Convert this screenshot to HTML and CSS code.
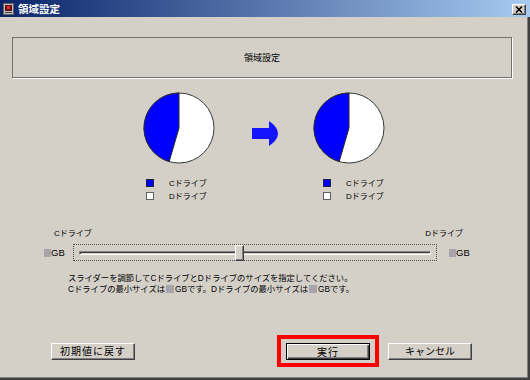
FILE: index.html
```html
<!DOCTYPE html>
<html lang="ja">
<head>
<meta charset="utf-8">
<title>領域設定</title>
<link rel="stylesheet" href="styles.css">
</head>
<body>
<div class="window">
  <div class="titlebar">
    <svg class="app-icon" width="11" height="12" viewBox="0 0 11 12">
      <rect x="0.5" y="0.5" width="10" height="11" fill="#c0c0c0" stroke="#606060"/>
      <rect x="2" y="2" width="7" height="6" fill="#6a1010"/>
      <rect x="4" y="3" width="3" height="3" fill="#e03030"/>
      <rect x="2" y="9" width="7" height="1" fill="#404040"/>
    </svg>
    <span class="title">領域設定</span>
    <span class="close">
      <svg width="8" height="7" viewBox="0 0 8 7"><path d="M1 0.5 L7 6.5 M7 0.5 L1 6.5" stroke="#000" stroke-width="1.6"/></svg>
    </span>
  </div>
  <div class="content">
    <div class="header-box">領域設定</div>

    <div class="pies">
      <svg class="pie" width="72" height="72" viewBox="0 0 72 72">
        <circle cx="36" cy="36" r="35" fill="#fff" stroke="#3a3a3a" stroke-width="1"/>
        <path d="M36 36 L36 1 A35 35 0 0 0 26.2 69.6 Z" fill="#0000ff" stroke="#2a2a2a" stroke-width="1"/>
      </svg>
      <svg class="arrow" width="26" height="25" viewBox="0 0 26 25">
        <path d="M0 7 H17 V0 Q26 6 26 12.5 Q26 19 17 25 V18 H0 Z" fill="#1414ff"/>
      </svg>
      <svg class="pie" width="72" height="72" viewBox="0 0 72 72">
        <circle cx="36" cy="36" r="35" fill="#fff" stroke="#3a3a3a" stroke-width="1"/>
        <path d="M36 36 L36 1 A35 35 0 0 0 26.2 69.6 Z" fill="#0000ff" stroke="#2a2a2a" stroke-width="1"/>
      </svg>
    </div>

    <div class="legends">
      <ul class="legend">
        <li><i class="swatch swatch-c"></i>Cドライブ</li>
        <li><i class="swatch swatch-d"></i>Dドライブ</li>
      </ul>
      <ul class="legend">
        <li><i class="swatch swatch-c"></i>Cドライブ</li>
        <li><i class="swatch swatch-d"></i>Dドライブ</li>
      </ul>
    </div>

    <div class="slider-labels"><span>Cドライブ</span><span>Dドライブ</span></div>

    <div class="slider-row">
      <span class="size size-left"><i class="ph"></i>GB</span>
      <div class="slider">
        <div class="track"></div>
        <div class="thumb"></div>
      </div>
      <span class="size"><i class="ph"></i>GB</span>
    </div>

    <p class="desc">スライダーを調節してCドライブとDドライブのサイズを指定してください。<br>Cドライブの最小サイズは<i class="ph ph-text"></i>GBです。Dドライブの最小サイズは<i class="ph ph-text"></i>GBです。</p>

    <div class="buttons">
      <button class="btn btn-reset">初期値に戻す</button>
      <span class="highlight"><button class="btn btn-default">実行</button></span>
      <button class="btn btn-cancel">キャンセル</button>
    </div>
  </div>
</div>
</body>
</html>
```

FILE: styles.css
```css
* { box-sizing: border-box; margin: 0; padding: 0; }
html, body { width: 530px; height: 380px; overflow: hidden; }
body {
  background: #d4d0c8;
  font-family: "Liberation Sans", "Noto Sans CJK JP", sans-serif;
  color: #000;
}
.window {
  width: 530px;
  height: 380px;
  background: #d4d0c8;
  box-shadow: inset -2px -2px 0 #404040, inset -3px -3px 0 #808080;
  display: flex;
  flex-direction: column;
}
.titlebar {
  height: 17px;
  background: linear-gradient(to right, #0a246a, #a6caf0);
  display: flex;
  align-items: center;
  padding: 0 4px 0 3px;
}
.app-icon { display: block; flex: none; }
.title {
  margin-left: 4px;
  color: #fff;
  font-family: "Noto Sans CJK JP", sans-serif;
  font-weight: bold;
  font-size: 10.5px;
  line-height: 17px;
  flex: 1;
}
.close {
  width: 14px;
  height: 11px;
  background: #d4d0c8;
  border: 1px solid;
  border-color: #fff #404040 #404040 #fff;
  box-shadow: inset -1px -1px 0 #808080;
  display: flex;
  align-items: center;
  justify-content: center;
  margin-top: 1px;
}
.close svg { display: block; }

.content { display: flex; flex-direction: column; }

.header-box {
  margin: 20px 0 0 12px;
  width: 500px;
  height: 41px;
  border: 1px solid #707070;
  box-shadow: 1px 1px 0 #fff;
  display: flex;
  align-items: center;
  justify-content: center;
  font-family: "Noto Sans CJK JP", sans-serif;
  font-size: 9px;
}

.pies {
  display: flex;
  align-items: flex-start;
  margin: 14px 0 0 143px;
}
.pie { display: block; }
.arrow { display: block; margin: 29px 35px 0 37px; }

.legends {
  display: grid;
  grid-template-columns: 177px auto;
  margin: 12px 0 0 146px;
}
.legend { list-style: none; }
.legend li {
  display: flex;
  align-items: center;
  height: 13px;
  font-size: 8px;
}
.swatch {
  width: 8px;
  height: 8px;
  margin-right: 15px;
  border: 1px solid #404040;
}
.swatch-c { background: #0000ff; border-color: #202040; }
.swatch-d { background: #fff; border-color: #606060; }

.slider-labels {
  display: flex;
  justify-content: space-between;
  margin: 26px 67px 0 54px;
  font-size: 8px;
  line-height: 12px;
}

.slider-row {
  display: flex;
  align-items: center;
  margin: 4px 0 0 44px;
  height: 17px;
}
.size {
  display: flex;
  align-items: center;
  font-size: 9.5px;
  color: #000;
}
.size-left { width: 29px; }
.ph {
  display: inline-block;
  width: 7px;
  height: 8px;
  background: #a8a4ac;
}
.slider {
  position: relative;
  width: 364px;
  height: 17px;
  margin-right: 12px;
  border: 1px dotted #505050;
  display: flex;
  align-items: center;
  padding: 0 5px;
}
.track {
  flex: 1;
  height: 4px;
  border: 1px solid;
  border-color: #808080 #fff #fff #808080;
  box-shadow: inset 1px 1px 0 #404040;
  background: #d4d0c8;
}
.thumb {
  position: absolute;
  left: 161px;
  top: 0;
  width: 9px;
  height: 16px;
  background: #d4d0c8;
  border: 1px solid;
  border-color: #fff #404040 #404040 #fff;
  box-shadow: inset -1px -1px 0 #808080;
}

.desc {
  margin: 12px 0 0 68px;
  font-size: 8.3px;
  line-height: 10.5px;
}
.ph-text { width: 8px; height: 8px; vertical-align: -1px; margin: 0 1px; }

.buttons {
  display: flex;
  align-items: center;
  margin: 41px 0 0 51px;
  height: 32px;
}
.btn {
  width: 84px;
  height: 17px;
  background: #d4d0c8;
  border: 1px solid;
  border-color: #fff #404040 #404040 #fff;
  box-shadow: inset -1px -1px 0 #808080;
  font-family: "Noto Sans CJK JP", sans-serif;
  font-size: 10px;
  letter-spacing: 1px;
  line-height: 14px;
  color: #000;
  padding: 0;
}
.btn-reset { margin-right: 142px; }
.btn-cancel { margin-left: 9px; letter-spacing: 0; }
.btn-default {
  display: block;
  border: 1px solid #000;
  box-shadow: inset 1px 1px 0 #fff, inset -1px -1px 0 #404040, inset -2px -2px 0 #808080;
}
.highlight {
  display: block;
  border: 4px solid #f00;
  padding: 4px 5px 3px 5px;
}
```
